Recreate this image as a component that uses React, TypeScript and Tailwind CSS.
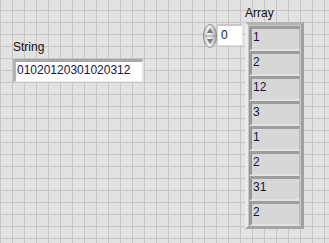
const items = ["1", "2", "12", "3", "1", "2", "31", "2"];

function Spinner() {
  return (
    <svg width="14" height="24" viewBox="0 0 14 24">
      <defs>
        <linearGradient id="sp" x1="0" x2="1" y1="0" y2="0">
          <stop offset="0" stopColor="#c8c8c8" />
          <stop offset="0.45" stopColor="#f2f2f2" />
          <stop offset="1" stopColor="#a9a9a9" />
        </linearGradient>
      </defs>
      <ellipse cx="7" cy="12" rx="6.5" ry="11.5" fill="url(#sp)" stroke="#8c8c8c" />
      <line x1="1" y1="12" x2="13" y2="12" stroke="#9a9a9a" />
      <path d="M7 4 L10 9 L4 9 Z" fill="#7a7a7a" />
      <path d="M7 20 L10 15 L4 15 Z" fill="#7a7a7a" />
    </svg>
  );
}

function ArrayItem({ value }: { value: string }) {
  return (
    <div className="h-[25px] border-t-[3px] border-l-[3px] border-r border-b-[2px] border-t-[#9d9d9d] border-l-[#999999] border-r-[#b9b9b9] border-b-[#e2e2e2] bg-[#d7d7d7] pl-[1px] text-[12px] leading-[17px] text-[#14143c]">
      {value}
    </div>
  );
}

export default function App() {
  return (
    <div className="w-[329px] h-[243px] overflow-hidden bg-[#e2e2e2] bg-[linear-gradient(to_right,#c6c6c6_1px,transparent_1px),linear-gradient(to_bottom,#c6c6c6_1px,transparent_1px)] [background-size:12px_12px] [background-position:0_10px] font-['Liberation_Sans',Arial,sans-serif]">
      <div className="flex">
        <div className="ml-[13px] pt-[40px]">
          <p className="text-[12px] leading-[14px] text-[#111111]">String</p>
          <div className="mt-[5px] w-[130px] h-[23px] border-t-[3px] border-l-[3px] border-r border-b border-t-[#a8a8a8] border-l-[#b4b4b4] border-r-[#e8e8e8] border-b-[#ececec] bg-white pl-[1px] text-[12px] leading-[17px] text-[#14143c]">
            01020120301020312
          </div>
        </div>

        <div className="ml-[60px] pt-[6px]">
          <p className="pl-[42px] text-[12px] leading-[14px] text-[#111111]">Array</p>
          <div className="mt-[2px] flex items-start">
            <div className="mt-[2px] flex items-start">
              <Spinner />
              <div className="w-[25px] h-[21px] border-t-2 border-l border-t-[#c9c9c9] border-l-[#d6d6d6] bg-white pl-[3px] text-[12px] leading-[18px] text-[#14143c]">
                0
              </div>
            </div>
            <div className="ml-[3px] w-[59px] border-t-[3px] border-l-[3px] border-r-[3px] border-b-[3px] border-t-[#b4b4b4] border-l-[#ebebeb] border-r-[#a0a0a0] border-b-[#a4a4a4] bg-[#c6c6c6] px-[1px] pt-[1px]">
              {items.map((v, i) => (
                <ArrayItem key={i} value={v} />
              ))}
            </div>
          </div>
        </div>
      </div>
    </div>
  );
}
